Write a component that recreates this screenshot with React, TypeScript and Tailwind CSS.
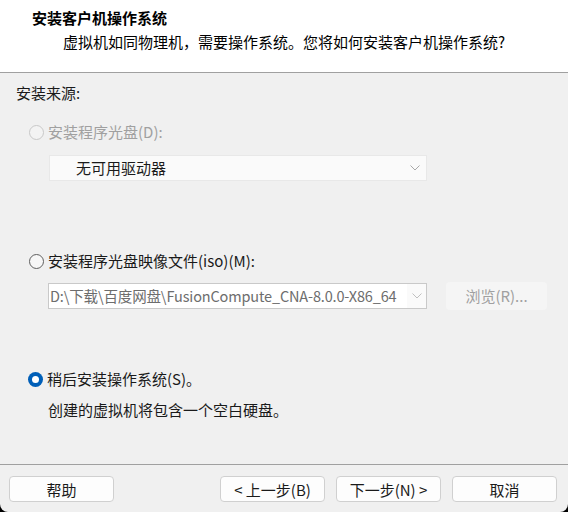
import React from "react";

const font = { fontFamily: '"Noto Sans CJK SC", "Noto Sans", sans-serif' };

function Chevron({ color }: { color: string }) {
  return (
    <svg width="10" height="6" viewBox="0 0 10 6" fill="none">
      <path d="M0.5 0.5 L5 5 L9.5 0.5" stroke={color} strokeWidth="1" />
    </svg>
  );
}

function Radio({ state }: { state: "disabled" | "off" | "on" }) {
  if (state === "on") {
    return (
      <span className="flex h-[15px] w-[15px] items-center justify-center rounded-full bg-[#005fb8]">
        <span className="h-[7px] w-[7px] rounded-full bg-white" />
      </span>
    );
  }
  return (
    <span
      className={`h-[15px] w-[15px] rounded-full border ${
        state === "disabled" ? "border-[#c8c8c8] bg-[#f3f3f3]" : "border-[#5f5f5f] bg-[#f7f7f7]"
      }`}
    />
  );
}

function Button({ children }: { children: React.ReactNode }) {
  return (
    <button className="flex h-[26px] w-[105px] items-center justify-center rounded-[4px] border border-[#d0d0d0] bg-[#fdfdfd] text-[15px] leading-none text-[#1a1a1a]">
      {children}
    </button>
  );
}

export default function App() {
  return (
    <div className="h-[512px] w-[568px] bg-black" style={font}>
      <div className="flex h-full flex-col overflow-hidden rounded-b-[8px] bg-[#f0f0f0] text-[15px] leading-[20px] text-[#1a1a1a]">
        {/* header */}
        <div className="h-[73px] border-b border-[#a0a0a0] bg-white pl-[32px] pt-[8px]">
          <div className="font-bold text-black">安装客户机操作系统</div>
          <div className="mt-[4px] pl-[31px] text-black">
            虚拟机如同物理机，需要操作系统。您将如何安装客户机操作系统?
          </div>
        </div>

        {/* body */}
        <div className="flex flex-1 flex-col px-[16px] pt-[10px]">
          <div>安装来源:</div>

          <div className="mt-[19px] flex items-center gap-[4px] pl-[13px] text-[#a0a0a0]">
            <Radio state="disabled" />
            <span>安装程序光盘(D):</span>
          </div>
          <div className="ml-[33px] mt-[13px] flex h-[26px] w-[378px] items-center justify-between border border-[#e8e8e8] bg-[#fafafa] pl-[26px] pr-[6px]">
            <span className="leading-[22px] text-[#1a1a1a]">无可用驱动器</span>
            <Chevron color="#a8a8a8" />
          </div>

          <div className="mt-[70px] flex items-center gap-[4px] pl-[13px]">
            <Radio state="off" />
            <span>安装程序光盘映像文件(iso)(M):</span>
          </div>
          <div className="mt-[11px] flex items-center">
            <div className="ml-[32px] flex h-[26px] w-[379px] items-center border border-[#c9c9c9] bg-[#fafafa]">
              <div className="h-full w-[358px] overflow-hidden whitespace-nowrap bg-white pl-[1px] text-[14.5px] leading-[24px] tracking-[-0.15px] text-[#6d6d6d]">
                D:\下载\百度网盘\FusionCompute_CNA-8.0.0-X86_64
              </div>
              <div className="flex flex-1 items-center justify-center">
                <Chevron color="#c0c0c0" />
              </div>
            </div>
            <div className="ml-[19px]">
              <div className="flex h-[28px] w-[101px] items-center justify-center rounded-[4px] bg-[#f5f5f5] text-[#a0a0a0]">
                浏览(R)...
              </div>
            </div>
          </div>

          <div className="mt-[59px] flex items-center gap-[4px] pl-[12px]">
            <Radio state="on" />
            <span>稍后安装操作系统(S)。</span>
          </div>
          <div className="mt-[11px] pl-[32px]">创建的虚拟机将包含一个空白硬盘。</div>
        </div>

        {/* footer */}
        <div className="flex h-[48px] border-t border-[#a0a0a0] px-[9px] pt-[11px]">
          <Button>帮助</Button>
          <div className="ml-auto flex gap-[11px] pr-[2px]">
            <Button>&lt; 上一步(B)</Button>
            <Button>下一步(N) &gt;</Button>
            <Button>取消</Button>
          </div>
        </div>
      </div>
    </div>
  );
}
